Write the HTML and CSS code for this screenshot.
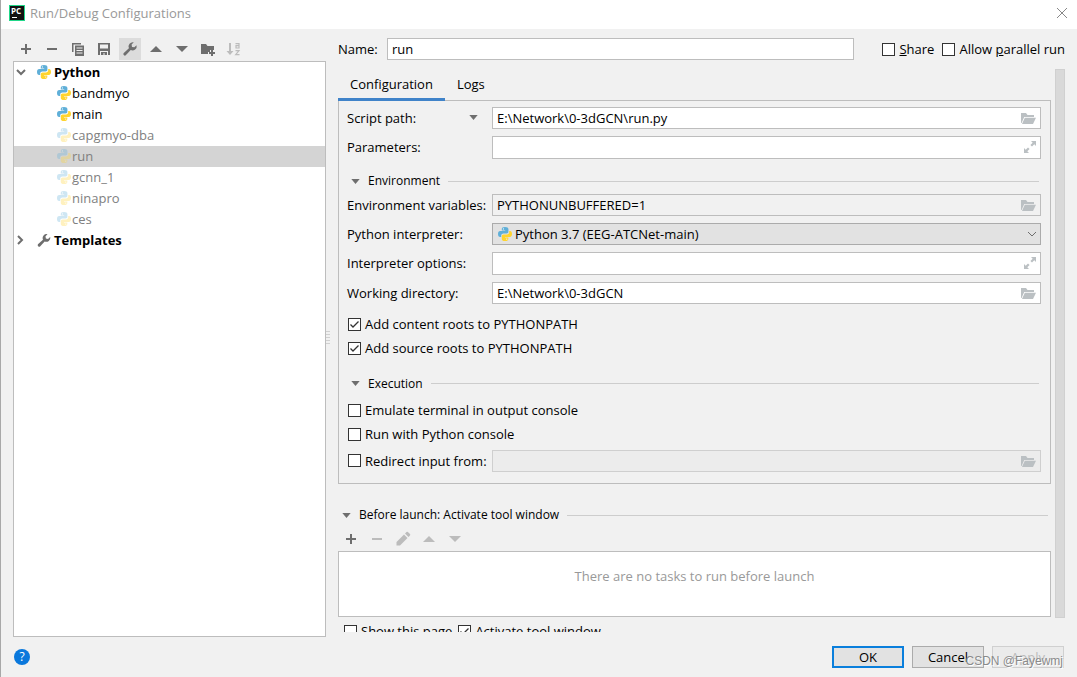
FILE: index.html
```html
<!DOCTYPE html>
<html lang="en">
<head>
<meta charset="utf-8">
<title>Run/Debug Configurations</title>
<link rel="stylesheet" href="styles.css">
</head>
<body>
<svg class="defs" width="0" height="0" aria-hidden="true">
  <symbol id="python" viewBox="0 0 14 14">
    <path fill="#5fafd8" d="M7 0C4.600 0 3.800.9 3.800 2.100V3.500H7.200V4.100H2.200C.8 4.100 0 5.200 0 7s.8 3 2.100 3H3.200V8.600C3.200 7.300 4.200 6.500 5.400 6.500H8.600C9.700 6.500 10.400 5.800 10.400 4.800V2.100C10.400.9 9.300 0 7 0Z"/>
    <path fill="#ffd42e" d="M7 14c2.400 0 3.300-.9 3.300-2.100V10.500H7V9.900H11.900C13.200 9.900 14 8.800 14 7s-.8-3-2-3H11.200V5.300C11.200 6.700 10.200 7.400 9 7.400H5.600C4.500 7.400 3.800 8.100 3.800 9.200V11.900C3.800 13.100 4.800 14 7 14Z"/>
    <circle cx="5.400" cy="1.900" r=".6" fill="#fff"/><circle cx="8.800" cy="12.100" r=".6" fill="#fff"/>
  </symbol>
  <symbol id="plus" viewBox="0 0 16 16"><path fill="currentColor" d="M7 3h2v4h4v2H9v4H7V9H3V7h4z"/></symbol>
  <symbol id="minus" viewBox="0 0 16 16"><path fill="currentColor" d="M3 7h10v2H3z"/></symbol>
  <symbol id="up" viewBox="0 0 16 16"><path fill="currentColor" d="M8 5l6 6H2z"/></symbol>
  <symbol id="down" viewBox="0 0 16 16"><path fill="currentColor" d="M8 11l6-6H2z"/></symbol>
  <symbol id="wrench" viewBox="0 0 16 16"><path fill="currentColor" d="M14.600 4.200a4.300 4.300 0 0 1-5.900 4.900L4 14.100a1.500 1.500 0 0 1-2.200-2.200L6.900 7.200A4.300 4.300 0 0 1 11.800 1.300L9.600 3.600l.4 2.300 2.300.4z"/></symbol>
  <symbol id="folder" viewBox="0 0 16 16"><path fill="currentColor" d="M1 13V3h5l1.500 2H14v2H4.200L1.600 13z"/><path fill="currentColor" d="M4.800 7.800H16L13 14H2z"/></symbol>
  <symbol id="expand" viewBox="0 0 14 14"><path fill="currentColor" d="M8 1h5v5l-1.700-1.700L9 6.600 7.400 5l2.300-2.300zM6 13H1V8l1.700 1.700L5 7.400 6.600 9l-2.300 2.300z"/></symbol>
  <symbol id="fold" viewBox="0 0 10 6"><path fill="currentColor" d="M0 0h10L5 6z"/></symbol>
</svg>

<div class="dialog">
  <header class="titlebar">
    <svg class="logo" viewBox="0 0 16 16" aria-hidden="true"><rect width="16" height="16" fill="#21d789"/><rect x="1" y="1" width="14" height="14" fill="#111"/><text class="logo-text" x="2" y="9">PC</text><path fill="#fff" d="M3 12h5v1H3z"/></svg>
    <h1 class="title">Run/Debug Configurations</h1>
    <button class="close" aria-label="Close"><svg width="12" height="12" viewBox="0 0 12 12"><path d="M1 1l10 10M11 1L1 11" stroke="#888" fill="none"/></svg></button>
  </header>

  <main class="main">
    <section class="sidebar">
      <div class="toolbar">
        <button class="tool" aria-label="Add"><svg><use href="#plus"/></svg></button>
        <button class="tool" aria-label="Remove"><svg><use href="#minus"/></svg></button>
        <button class="tool" aria-label="Copy"><svg viewBox="0 0 16 16"><path fill="currentColor" fill-rule="evenodd" d="M2 2h9v1.500H3.500V11H2zM5 4.500h9V15H5zM6.500 6.500v1h6v-1zM6.500 9v1h6V9zM6.500 11.500v1h6v-1z"/></svg></button>
        <button class="tool" aria-label="Save"><svg viewBox="0 0 16 16"><path fill="currentColor" fill-rule="evenodd" d="M2 2h12v12h-2v-4H4v4H2zM4 3.500v4h8v-4zM5 11h6v3H8.500v-2h-1v2H5z"/></svg></button>
        <button class="tool active" aria-label="Edit templates"><svg><use href="#wrench"/></svg></button>
        <button class="tool" aria-label="Move up"><svg><use href="#up"/></svg></button>
        <button class="tool" aria-label="Move down"><svg><use href="#down"/></svg></button>
        <button class="tool" aria-label="Create folder"><svg viewBox="0 0 16 16"><path fill="currentColor" d="M1 3h5l1.500 2H14v4h-4v2H8v2H1z"/><path fill="currentColor" d="M11 9h2v2h2v2h-2v2h-2v-2H9v-2h2z"/></svg></button>
        <button class="tool" aria-label="Sort" disabled><svg viewBox="0 0 16 16"><path fill="currentColor" d="M3 2h2v8h2.500L4 14 .5 10H3z"/><path fill="none" stroke="currentColor" stroke-width="1.200" d="M9.500 2.600H13V7h-3V4.700h3M9.500 9.600H13l-3.300 4h3.800"/></svg></button>
      </div>
      <ul class="tree">
        <li class="node group"><svg class="chev" viewBox="0 0 10 10"><path d="M1 3l4 4 4-4"/></svg><svg class="py"><use href="#python"/></svg><span>Python</span></li>
        <li class="node leaf"><svg class="py"><use href="#python"/></svg>bandmyo</li>
        <li class="node leaf"><svg class="py"><use href="#python"/></svg>main</li>
        <li class="node leaf dim"><svg class="py"><use href="#python"/></svg>capgmyo-dba</li>
        <li class="node leaf dim selected"><svg class="py"><use href="#python"/></svg>run</li>
        <li class="node leaf dim"><svg class="py"><use href="#python"/></svg>gcnn_1</li>
        <li class="node leaf dim"><svg class="py"><use href="#python"/></svg>ninapro</li>
        <li class="node leaf dim"><svg class="py"><use href="#python"/></svg>ces</li>
        <li class="node group"><svg class="chev" viewBox="0 0 10 10"><path d="M2 1l4 4-4 4"/></svg><svg class="py gray" viewBox="1 0 14 15"><use href="#wrench" width="16" height="16"/></svg><span>Templates</span></li>
      </ul>
    </section>

    <div class="splitter"></div>

    <section class="editor">
      <div class="name-row">
        <label class="name-label" for="name">Name:</label>
        <input class="field name-field" id="name" type="text" value="run">
        <label class="check"><input type="checkbox"><span><u>S</u>hare</span></label>
        <label class="check"><input type="checkbox"><span>Allow <u>p</u>arallel run</span></label>
      </div>

      <div class="scroll">
        <div class="content">
          <nav class="tabs">
            <button class="tab current">Configuration</button>
            <button class="tab">Logs</button>
          </nav>
          <div class="panel">
            <div class="row">
              <label class="script-label" for="script">Script path: <svg class="fold"><use href="#fold"/></svg></label>
              <div class="wrap"><input class="field" id="script" type="text" value="E:\Network\0-3dGCN\run.py"><svg class="in-icon"><use href="#folder"/></svg></div>
            </div>
            <div class="row">
              <label for="params">Parameters:</label>
              <div class="wrap"><input class="field tall" id="params" type="text"><svg class="in-icon small"><use href="#expand"/></svg></div>
            </div>
            <h2 class="section env"><svg class="fold"><use href="#fold"/></svg>Environment</h2>
            <div class="row">
              <label for="env">Environment variables:</label>
              <div class="wrap"><input class="field plain" id="env" type="text" value="PYTHONUNBUFFERED=1"><svg class="in-icon"><use href="#folder"/></svg></div>
            </div>
            <div class="row">
              <label for="interp">Python interpreter:</label>
              <div class="wrap"><select class="field select" id="interp"><option>Python 3.7 (EEG-ATCNet-main)</option></select><svg class="py in-py"><use href="#python"/></svg><svg class="caret" viewBox="0 0 10 10"><path d="M1 3l4 4 4-4"/></svg></div>
            </div>
            <div class="row">
              <label for="opts">Interpreter options:</label>
              <div class="wrap"><input class="field tall" id="opts" type="text"><svg class="in-icon small"><use href="#expand"/></svg></div>
            </div>
            <div class="row">
              <label for="dir">Working directory:</label>
              <div class="wrap"><input class="field" id="dir" type="text" value="E:\Network\0-3dGCN"><svg class="in-icon"><use href="#folder"/></svg></div>
            </div>
            <div class="checks">
              <label class="check"><input type="checkbox" checked>Add content roots to PYTHONPATH</label>
              <label class="check"><input type="checkbox" checked>Add source roots to PYTHONPATH</label>
            </div>
            <h2 class="section"><svg class="fold"><use href="#fold"/></svg>Execution</h2>
            <div class="checks last">
              <label class="check"><input type="checkbox">Emulate terminal in output console</label>
              <label class="check"><input type="checkbox">Run with Python console</label>
            </div>
            <div class="row">
              <label class="check"><input type="checkbox">Redirect input from:</label>
              <div class="wrap"><input class="field" type="text" aria-label="Redirect input from" disabled><svg class="in-icon"><use href="#folder"/></svg></div>
            </div>
          </div>

          <h2 class="section launch"><svg class="fold"><use href="#fold"/></svg>Before launch: Activate tool window</h2>
          <div class="toolbar">
            <button class="tool" aria-label="Add task"><svg><use href="#plus"/></svg></button>
            <button class="tool" aria-label="Remove task" disabled><svg><use href="#minus"/></svg></button>
            <button class="tool" aria-label="Edit task" disabled><svg viewBox="0 0 16 16"><path fill="currentColor" d="M1.500 11L9 3.500 12.500 7 5 14.500H1.500zM10 2.500L11.500 1q.7-.6 1.400 0L15 3.100q.6.700 0 1.400L13.500 6z"/></svg></button>
            <button class="tool" aria-label="Move task up" disabled><svg><use href="#up"/></svg></button>
            <button class="tool" aria-label="Move task down" disabled><svg><use href="#down"/></svg></button>
          </div>
          <div class="tasks">There are no tasks to run before launch</div>
          <div class="after">
            <label class="check"><input type="checkbox">Show this page</label>
            <label class="check"><input type="checkbox" checked>Activate tool window</label>
          </div>
        </div>
        <div class="scrollbar"></div>
      </div>
    </section>
  </main>

  <footer class="footer">
    <button class="help" aria-label="Help">?</button>
    <button class="btn primary">OK</button>
    <button class="btn">Cancel</button>
    <button class="btn" disabled>Apply</button>
    <span class="watermark">CSDN @Fayewmj</span>
  </footer>
</div>
</body>
</html>
```
FILE: styles.css
```css
* { box-sizing: border-box; }

body {
  margin: 0;
  background: #f1f1f1;
  color: #000;
  font: 13px/20px "Open Sans", "Noto Sans", sans-serif;
}

button, input, select { font: inherit; color: inherit; margin: 0; }
button { border: 0; padding: 0; background: none; }
svg { display: block; flex: none; }
.defs { position: absolute; }

.dialog {
  display: flex;
  flex-direction: column;
  height: 100vh;
  border-left: 1px solid #a8a8a8;
  overflow: hidden;
}

/* Title bar */
.titlebar {
  display: flex;
  align-items: center;
  height: 29px;
  padding: 0 9px 3px 8px;
  background: #fff;
}
.logo { width: 16px; height: 16px; }
.logo-text { font: bold 8px "Open Sans", sans-serif; fill: #fff; }
.title { flex: 1; margin: 0 0 0 5px; font-size: 13px; font-weight: 400; color: #999; }
.close { display: flex; }

/* Main area */
.main {
  flex: 1;
  display: grid;
  grid-template-columns: 313px 12px minmax(0, 1fr);
  min-height: 0;
  padding: 9px 12px 0 12px;
}
.sidebar { display: flex; flex-direction: column; min-height: 0; }
.toolbar { display: flex; gap: 4px; padding: 0 2px; }
.tool {
  display: flex;
  align-items: center;
  justify-content: center;
  width: 22px;
  height: 22px;
  color: #6e6e6e;
}
.tool svg { width: 16px; height: 16px; }
.tool.active { background: #dcdcdc; }
.tool:disabled { color: #bcbcbc; }

.tree {
  flex: 1;
  margin: 1px 0 0;
  padding: 0;
  list-style: none;
  background: #fff;
  border: 1px solid #bdbdbd;
}
.node { display: flex; align-items: center; height: 21px; padding-bottom: 1px; }
.group { padding-left: 2px; font-weight: 700; }
.group .py { margin: 0 3px 0 11px; }
.leaf { gap: 1px; padding-left: 43px; }
.py { width: 14px; height: 14px; }
.gray { color: #6e6e6e; }
.chev, .caret { width: 10px; height: 10px; fill: none; stroke: #6e6e6e; stroke-width: 2; }
.dim { color: #808080; }
.dim .py { opacity: .3; }
.selected { background: #d4d4d4; }

.splitter {
  align-self: center;
  width: 4px;
  height: 14px;
  background: repeating-linear-gradient(#d0d0d0 0 1px, transparent 1px 3px);
}

/* Editor */
.editor { display: flex; flex-direction: column; min-height: 0; padding-bottom: 5px; }
.name-row { display: flex; align-items: center; height: 22px; }
.name-label { width: 49px; }
.name-field { flex: 1; min-width: 0; }
.name-row .check { margin-left: 8px; }
.name-row .name-field + .check { margin-left: 28px; }

.field {
  display: block;
  width: 100%;
  height: 22px;
  padding: 0 24px 1px 4px;
  background: #fff;
  border: 1px solid #bdbdbd;
  border-radius: 0;
  outline: 0;
}
.tall { height: 23px; }
.plain { background: #f1f1f1; }
.field:disabled { background: #ececec; border-color: #cfcfcf; }
.select { appearance: none; padding: 0 24px 0 22px; background: #e2e2e2; border-color: #ababab; }

.check { display: flex; align-items: center; gap: 4px; white-space: nowrap; }
.check input {
  appearance: none;
  flex: none;
  width: 13px;
  height: 13px;
  background: #fff;
  border: 1px solid #333;
}
.check input:checked {
  background: #fff url("data:image/svg+xml,%3Csvg xmlns='http://www.w3.org/2000/svg' viewBox='0 0 11 11'%3E%3Cpath d='M1.500 5.500l2.500 2.500 5.500-5.500' fill='none' stroke='%23333' stroke-width='1.300'/%3E%3C/svg%3E");
}

.scroll { flex: 1; display: flex; gap: 4px; min-height: 0; margin-top: 9px; overflow: hidden; }
.content { flex: 1; min-width: 0; }
.scrollbar { width: 10px; margin-bottom: 14px; background: #d9d9d9; border: 1px solid #d0d0d0; }

.tabs {
  display: flex;
  height: 32px;
  background: linear-gradient(#bdbdbd, #bdbdbd) bottom / 100% 1px no-repeat;
}
.tab { padding: 0 12px; border-bottom: 3px solid transparent; }
.current { border-color: #4083c9; }
.panel {
  display: flex;
  flex-direction: column;
  gap: 7px;
  padding: 6px 9px 11px 8px;
  border: 1px solid #bdbdbd;
  border-top: 0;
}

.row { display: grid; grid-template-columns: 145px minmax(0, 1fr); align-items: center; }
.row > label { padding-bottom: 1px; }
.panel .check { padding-left: 1px; }
.wrap { position: relative; }
.in-icon { position: absolute; right: 5px; top: 3px; width: 16px; height: 16px; color: #bbc0c3; }
.small { right: 4px; top: 4px; width: 14px; height: 14px; }
.in-py { position: absolute; left: 6px; top: 4px; }
.caret { position: absolute; right: 4px; top: 6px; stroke-width: 1; }
.script-label { display: flex; align-items: center; justify-content: space-between; padding-right: 14px; }
.fold { width: 9px; height: 5px; color: #6e6e6e; }

.section {
  display: flex;
  align-items: center;
  gap: 8px;
  height: 21px;
  margin: 0;
  padding: 0 2px 0 4px;
  font-size: 12px;
  font-weight: 400;
}
.section::after { content: ""; flex: 1; border-top: 1px solid #cdcdcd; }
.env { padding-top: 9px; }
.launch { height: 20px; margin: 21px 0 3px; padding: 0 3px 0 4px; }

.checks { padding: 1px 0 6px; }
.checks .check { height: 24px; }
.checks.last { margin: -4px 0 -3px; padding: 0; }
.checks + .section { margin-bottom: 1px; }

.tasks {
  height: 66px;
  margin-top: 1px;
  padding-top: 14px;
  background: #fff;
  border: 1px solid #bdbdbd;
  color: #999;
  text-align: center;
}
.after { display: flex; gap: 6px; padding: 4px 6px; }

/* Footer */
.footer {
  position: relative;
  display: flex;
  align-items: center;
  gap: 8px;
  height: 40px;
  padding: 0 13px 0 13px;
}
.help {
  width: 16px;
  height: 16px;
  margin-right: auto;
  border-radius: 50%;
  background: #0a78dc;
  color: #fff;
  font-size: 12px;
  line-height: 16px;
}
.btn { width: 72px; height: 22px; background: #e2e2e2; border: 1px solid #ababab; line-height: 18px; }
.primary { border: 2px solid #0a7fdc; }
.btn:disabled { background: #ebebeb; border-color: #d0d0d0; color: #bbb; }
.watermark {
  position: absolute;
  right: 14px;
  bottom: 6px;
  font: 12px/20px "Liberation Sans", sans-serif;
  color: #8a8a8a;
  text-shadow: 1px 1px 0 #fff;
}
```
